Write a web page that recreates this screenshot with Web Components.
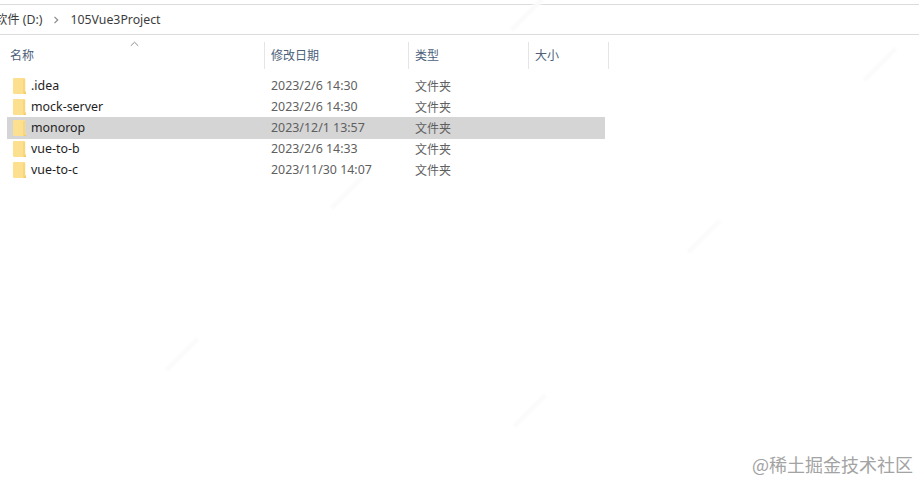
<!DOCTYPE html>
<html lang="zh">
<head>
<meta charset="utf-8">
<title>105Vue3Project</title>
<style>
  html, body { margin: 0; height: 100%; background: #fff; }
  body {
    position: relative;
    overflow: hidden;
    font-family: "Noto Sans", "Noto Sans CJK SC", sans-serif;
  }
</style>
</head>
<body>
<file-explorer>
  <path-bar slot="bar" drive="软件 (D:)" folder="105Vue3Project"></path-bar>
  <list-header slot="head"></list-header>
  <file-row name=".idea" date="2023/2/6 14:30"></file-row>
  <file-row name="mock-server" date="2023/2/6 14:30"></file-row>
  <file-row name="monorop" date="2023/12/1 13:57" selected></file-row>
  <file-row name="vue-to-b" date="2023/2/6 14:33"></file-row>
  <file-row name="vue-to-c" date="2023/11/30 14:07"></file-row>
</file-explorer>
<water-mark style="left:505px;top:12px"></water-mark>
<water-mark style="left:325px;top:190px"></water-mark>
<water-mark style="left:682px;top:234px"></water-mark>
<water-mark style="left:160px;top:352px"></water-mark>
<water-mark style="left:508px;top:408px"></water-mark>
<water-mark style="left:858px;top:62px"></water-mark>
<site-credit>@稀土掘金技术社区</site-credit>

<script>
const COLUMNS = '258px 144px 120px 76px';

class FileExplorer extends HTMLElement {
  constructor() {
    super();
    this.attachShadow({ mode: 'open' }).innerHTML = `
      <style>
        :host { display: block; padding-top: 4px; }
        .rows { display: block; margin: 6px 0 0 7px; width: 598px; }
      </style>
      <slot name="bar"></slot>
      <slot name="head"></slot>
      <div class="rows"><slot></slot></div>
    `;
  }
}
customElements.define('file-explorer', FileExplorer);

class PathBar extends HTMLElement {
  constructor() {
    super();
    this.attachShadow({ mode: 'open' }).innerHTML = `
      <style>
        :host {
          display: flex;
          align-items: center;
          height: 29px;
          border-top: 1px solid #dcdcdc;
          border-bottom: 1px solid #dcdcdc;
          overflow: hidden;
          font-size: 12.3px;
          line-height: 27px;
          color: #3c3c3c;
        }
        .drive { margin-left: -5px; white-space: nowrap; }
        svg { margin: 0 11px 0 11px; flex: none; }
      </style>
      <span class="drive">${this.getAttribute('drive')}</span>
      <svg width="6" height="8" viewBox="0 0 6 8"><path d="M1.5 .8 4.7 4 1.5 7.2" fill="none" stroke="#8a8a8a" stroke-width="1.2"/></svg>
      <span>${this.getAttribute('folder')}</span>
    `;
  }
}
customElements.define('path-bar', PathBar);

class ListHeader extends HTMLElement {
  constructor() {
    super();
    this.attachShadow({ mode: 'open' }).innerHTML = `
      <style>
        :host {
          display: grid;
          grid-template-columns: 265px 144px 120px 80px;
          width: 609px;
          height: 27px;
          margin-top: 7px;
          position: relative;
          font-size: 12px;
          line-height: 27px;
          color: #4c607a;
        }
        div {
          display: flex;
          align-items: flex-start;
          padding-left: 6px;
          border-right: 1px solid #e5e5e5;
        }
        div:first-of-type { padding-left: 10px; }
        svg { position: absolute; left: 130px; top: -1px; }
      </style>
      <svg width="9" height="6" viewBox="0 0 9 6"><path d="M.8 4.800 4.500 1.200 8.200 4.800" fill="none" stroke="#8c8c8c" stroke-width="1"/></svg>
      <div>名称</div><div>修改日期</div><div>类型</div><div>大小</div>
    `;
  }
}
customElements.define('list-header', ListHeader);

class FileRow extends HTMLElement {
  constructor() {
    super();
    this.attachShadow({ mode: 'open' }).innerHTML = `
      <style>
        :host {
          display: grid;
          grid-template-columns: ${COLUMNS};
          height: 21px;
          align-items: center;
          font-size: 12.4px;
          color: #5f5f5f;
        }
        :host([selected]) { background: #d5d5d5; box-shadow: 0 1px #d5d5d5; }
        .name { display: flex; align-items: center; color: #1e1e1e; padding-left: 6px; }
        .name svg { margin-right: 5px; flex: none; }
        .cell { padding-left: 6px; white-space: nowrap; }
        .kind { font-size: 12px; }
      </style>
      <div class="name">
        <svg width="13" height="16" viewBox="0 0 13 16">
          <path d="M0 1.200C0 .5.500 0 1.200 0H11c.9 0 1.300.5 1.300 1.200V13H13v3H1.200C.5 16 0 15.500 0 14.800Z" fill="#fce08f"/>
          <path d="M11.500 1V14.500H13V16H10.500V1Z" fill="#f3cb68"/>
        </svg>
        <span>${this.getAttribute('name')}</span>
      </div>
      <div class="cell">${this.getAttribute('date')}</div>
      <div class="cell kind">文件夹</div>
    `;
  }
}
customElements.define('file-row', FileRow);

class WaterMark extends HTMLElement {
  constructor() {
    super();
    this.attachShadow({ mode: 'open' }).innerHTML = `
      <style>
        :host {
          position: absolute;
          display: block;
          width: 44px;
          height: 5px;
          background: #fbfbfb;
          transform: rotate(-45deg);
          filter: blur(1.2px);
        }
      </style>
    `;
  }
}
customElements.define('water-mark', WaterMark);

class SiteCredit extends HTMLElement {
  constructor() {
    super();
    this.attachShadow({ mode: 'open' }).innerHTML = `
      <style>
        :host {
          position: absolute;
          right: 6px;
          top: 452px;
          font-size: 18px;
          line-height: 24px;
          color: #a3a3a3;
          font-family: "Noto Sans CJK SC", "Noto Sans", sans-serif;
          white-space: nowrap;
        }
      </style>
      <slot></slot>
    `;
  }
}
customElements.define('site-credit', SiteCredit);
</script>
</body>
</html>
